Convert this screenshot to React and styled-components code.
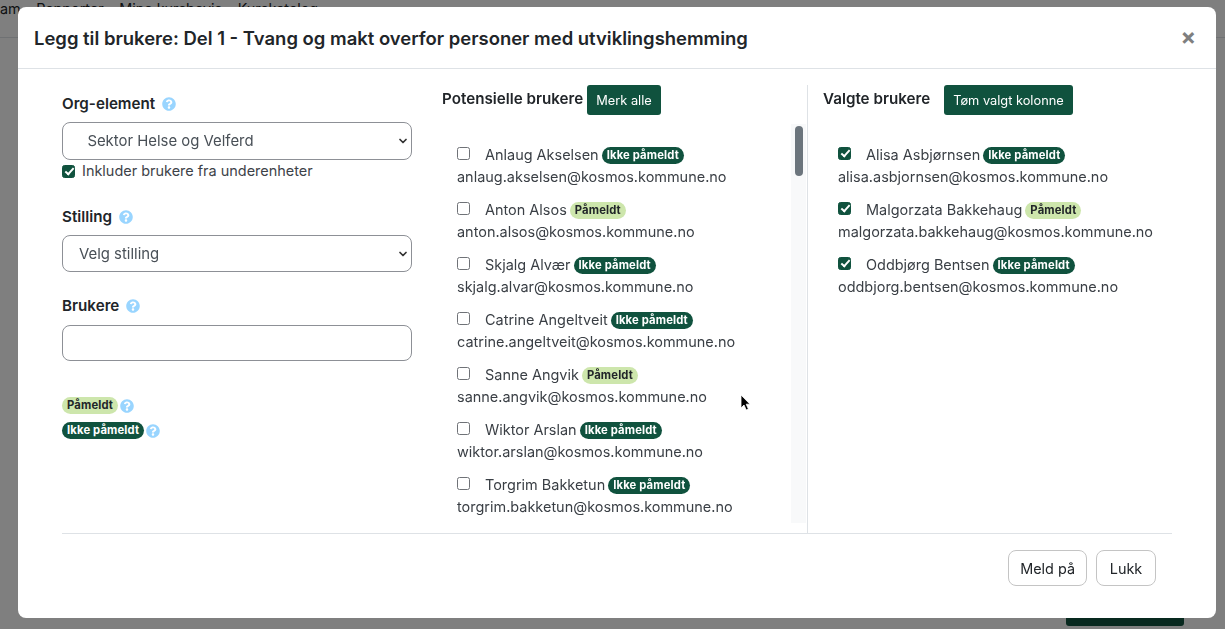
import React from 'react'
import styled, { createGlobalStyle } from 'styled-components'
import { FaQuestionCircle } from 'react-icons/fa'
import { ChevronDown } from 'lucide-react'

const green = '#10523e'

const potential = [
    { name: 'Anlaug Akselsen', email: 'anlaug.akselsen@kosmos.kommune.no', joined: false },
    { name: 'Anton Alsos', email: 'anton.alsos@kosmos.kommune.no', joined: true },
    { name: 'Skjalg Alvær', email: 'skjalg.alvar@kosmos.kommune.no', joined: false },
    { name: 'Catrine Angeltveit', email: 'catrine.angeltveit@kosmos.kommune.no', joined: false },
    { name: 'Sanne Angvik', email: 'sanne.angvik@kosmos.kommune.no', joined: true },
    { name: 'Wiktor Arslan', email: 'wiktor.arslan@kosmos.kommune.no', joined: false },
    { name: 'Torgrim Bakketun', email: 'torgrim.bakketun@kosmos.kommune.no', joined: false },
]

const selected = [
    { name: 'Alisa Asbjørnsen', email: 'alisa.asbjornsen@kosmos.kommune.no', joined: false },
    { name: 'Malgorzata Bakkehaug', email: 'malgorzata.bakkehaug@kosmos.kommune.no', joined: true },
    { name: 'Oddbjørg Bentsen', email: 'oddbjorg.bentsen@kosmos.kommune.no', joined: false },
]

const GlobalStyle = createGlobalStyle`
    html, body {
        margin: 0;
        height: 100%;
        overflow: hidden;
    }
    body {
        font-family: Inter, "Liberation Sans", sans-serif;
        font-size: 15px;
        color: #212529;
        background: #fff;
    }
`

const Page = styled.div`
    height: 100vh;
    display: flex;
    flex-direction: column;
    justify-content: space-between;
`

const Nav = styled.nav`
    height: 38px;
    box-sizing: border-box;
    border-bottom: 1px solid #dee2e6;
    display: flex;
    gap: 15.5px;
    font-size: 14.4px;
    line-height: 18px;
`

const PageFoot = styled.div`
    display: flex;
    justify-content: flex-end;
    padding: 0 41px 3px 0;
`

const PageButton = styled.div`
    width: 118px;
    height: 30px;
    background: ${green};
    border-radius: 3px;
`

const Backdrop = styled.div`
    position: fixed;
    inset: 0;
    background: rgba(0, 0, 0, 0.5);
    padding: 7px 9px 11px 18px;
    box-sizing: border-box;
`

const Modal = styled.div`
    height: 100%;
    background: #fff;
    border-radius: 8px;
    display: flex;
    flex-direction: column;
`

const ModalHeader = styled.header`
    height: 62px;
    box-sizing: border-box;
    flex: none;
    display: flex;
    align-items: center;
    justify-content: space-between;
    padding: 0 20px 0 16px;
    border-bottom: 1px solid #dee2e6;
`

const Title = styled.h5`
    margin: 0;
    font-size: 18.47px;
    font-weight: 600;
    color: #212529;
`

const CloseButton = styled.button`
    border: 0;
    background: none;
    padding: 0;
    font-family: inherit;
    font-size: 23px;
    line-height: 27px;
    font-weight: 700;
    color: #7f7f7f;
`

const ModalBody = styled.div`
    flex: 1;
    min-height: 0;
    margin: 0 44px;
    padding-top: 16px;
    display: grid;
    grid-template-columns: 350px 396px 1fr;
    border-bottom: 1px solid #dee2e6;
`

const LeftColumn = styled.div`
    display: flex;
    flex-direction: column;
    padding-top: 10px;
`

const Field = styled.div`
    margin-bottom: ${p => p.$gap}px;
`

const Label = styled.div`
    display: flex;
    align-items: center;
    gap: 7px;
    font-weight: 600;
    font-size: 15.2px;
    line-height: 18px;
    margin-bottom: ${p => p.$gap}px;
`

const HelpIcon = styled(FaQuestionCircle)`
    width: 14px;
    height: 14px;
    color: #99d5ff;
    flex: none;
`

const SelectWrap = styled.div`
    position: relative;
    svg {
        position: absolute;
        right: 3px;
        top: 50%;
        transform: translateY(-50%);
        width: 12px;
        height: 12px;
        stroke-width: 3.5;
        color: #333;
        pointer-events: none;
    }
`

const Select = styled.select`
    display: block;
    width: 100%;
    height: ${p => p.$height}px;
    appearance: none;
    background: #fff;
    border: 1px solid #8d9096;
    border-radius: 8px;
    padding: 0 16px;
    font-family: inherit;
    font-size: 14.9px;
    color: #495057;
`

const TextInput = styled.input`
    display: block;
    width: 100%;
    height: 36px;
    box-sizing: border-box;
    border: 1px solid #8d9096;
    border-radius: 8px;
    background: #fff;
`

const IncludeRow = styled.label`
    display: flex;
    align-items: center;
    gap: 7px;
    margin-top: 2px;
    line-height: 18px;
    color: #3d4248;
    font-size: 14.46px;
`

const Legend = styled.div`
    display: flex;
    flex-direction: column;
    gap: 8px;
    margin-top: 36px;
`

const LegendRow = styled.div`
    display: flex;
    align-items: center;
    gap: 2px;
    height: 17px;
`

const Badge = styled.span`
    display: inline-block;
    padding: 0 5px;
    border-radius: 9px;
    font-size: 11.25px;
    line-height: 17px;
    height: 17px;
    font-weight: 700;
    letter-spacing: 0.15px;
    background: ${p => (p.$joined ? '#cde6ac' : green)};
    color: ${p => (p.$joined ? '#212529' : '#fff')};
`

const Column = styled.section`
    display: flex;
    flex-direction: column;
    min-width: 0;
`

const MiddleColumn = styled(Column)`
    margin-left: 30px;
    border-right: 1px solid #dee2e6;
`

const RightColumn = styled(Column)`
    padding-left: 15px;
`

const ColumnHead = styled.div`
    display: flex;
    align-items: flex-start;
    gap: ${p => p.$gap}px;
    height: 39px;
    flex: none;
`

const ColumnTitle = styled.span`
    font-weight: 600;
    font-size: 15.2px;
    line-height: 28px;
`

const GreenButton = styled.button`
    height: 30px;
    padding: 0 9px;
    border: 0;
    border-radius: 3px;
    background: ${green};
    color: #fff;
    font-family: inherit;
    font-size: 12.8px;
`

const ScrollWrap = styled.div`
    position: relative;
    height: 399px;
    flex: none;
`

const UserList = styled.div`
    height: 100%;
    overflow: hidden;
    padding: 20px 0 0 15px;
    box-sizing: border-box;
`

const Track = styled.div`
    position: absolute;
    top: 0;
    right: 1px;
    bottom: 0;
    width: 15px;
    background: #f8f9fa;
`

const Thumb = styled.div`
    position: absolute;
    top: 2px;
    left: 4px;
    width: 8px;
    height: 50px;
    border-radius: 4px;
    background: #6c757d;
`

const SelectedList = styled.div`
    padding: 20px 0 0 15px;
`

const UserRow = styled.div`
    height: 55px;
    line-height: 22px;
    font-size: 14.46px;
    color: #3a3f45;
    white-space: nowrap;
`

const NameLine = styled.div`
    display: flex;
    align-items: center;
    height: 22px;
`

const Check = styled.input`
    appearance: none;
    width: 13px;
    height: 13px;
    margin: 0 15px 0 0;
    flex: none;
    box-sizing: border-box;
    border: 1px solid #6f7277;
    border-radius: 2.5px;
    background: #fff;
    position: relative;
    top: -2px;
    &:checked {
        background: ${green};
        border-color: ${green};
    }
    &:checked::after {
        content: '';
        position: absolute;
        left: 3.5px;
        top: 0.5px;
        width: 3px;
        height: 7px;
        border: solid #fff;
        border-width: 0 2px 2px 0;
        transform: rotate(42deg);
    }
`

const IncludeCheck = styled(Check)`
    margin: 0;
    top: 0;
`

const Name = styled.span`
    margin-right: 3px;
`

const ModalFooter = styled.footer`
    flex: none;
    height: 84px;
    box-sizing: border-box;
    display: flex;
    justify-content: flex-end;
    gap: 9px;
    padding: 16px 60px 0 0;
`

const OutlineButton = styled.button`
    height: 36px;
    min-width: 60px;
    padding: 0 11px;
    border: 1px solid #c4c4c4;
    border-radius: 8px;
    background: #fff;
    color: #212529;
    font-family: inherit;
    font-size: 14.4px;
`

const Pointer = styled.svg`
    position: absolute;
    left: 740px;
    top: 394px;
    width: 11px;
    height: 17px;
`

const UserEntry = ({ user, checked }) => (
    <UserRow>
        <NameLine>
            <Check type="checkbox" defaultChecked={checked} />
            <Name>{user.name}</Name>
            <Badge $joined={user.joined}>{user.joined ? 'Påmeldt' : 'Ikke påmeldt'}</Badge>
        </NameLine>
        <div>{user.email}</div>
    </UserRow>
)

export default function App() {
    return (
        <>
            <GlobalStyle />
            <Page>
                <Nav>
                    <span>am</span>
                    <span>Rapporter</span>
                    <span>Mine kursbevis</span>
                    <span>Kurskatalog</span>
                </Nav>
                <PageFoot>
                    <PageButton />
                </PageFoot>
            </Page>
            <Backdrop>
                <Modal>
                    <ModalHeader>
                        <Title>Legg til brukere: Del 1 - Tvang og makt overfor personer med utviklingshemming</Title>
                        <CloseButton>×</CloseButton>
                    </ModalHeader>
                    <ModalBody>
                        <LeftColumn>
                            <Field $gap={28}>
                                <Label $gap={9}>Org-element <HelpIcon /></Label>
                                <SelectWrap>
                                    <Select $height={38} defaultValue="sektor">
                                        <option value="sektor">{'\u00a0\u00a0Sektor Helse og Velferd'}</option>
                                    </Select>
                                    <ChevronDown />
                                </SelectWrap>
                                <IncludeRow>
                                    <IncludeCheck type="checkbox" defaultChecked />
                                    Inkluder brukere fra underenheter
                                </IncludeRow>
                            </Field>
                            <Field $gap={25}>
                                <Label $gap={9}>Stilling <HelpIcon /></Label>
                                <SelectWrap>
                                    <Select $height={37} defaultValue="velg">
                                        <option value="velg">Velg stilling</option>
                                    </Select>
                                    <ChevronDown />
                                </SelectWrap>
                            </Field>
                            <Field $gap={0}>
                                <Label $gap={10}>Brukere <HelpIcon /></Label>
                                <TextInput type="text" />
                            </Field>
                            <Legend>
                                <LegendRow><Badge $joined>Påmeldt</Badge><HelpIcon /></LegendRow>
                                <LegendRow><Badge>Ikke påmeldt</Badge><HelpIcon /></LegendRow>
                            </Legend>
                        </LeftColumn>
                        <MiddleColumn>
                            <ColumnHead $gap={4}>
                                <ColumnTitle>Potensielle brukere</ColumnTitle>
                                <GreenButton>Merk alle</GreenButton>
                            </ColumnHead>
                            <ScrollWrap>
                                <UserList>
                                    {potential.map(user => <UserEntry key={user.email} user={user} />)}
                                </UserList>
                                <Track><Thumb /></Track>
                            </ScrollWrap>
                        </MiddleColumn>
                        <RightColumn>
                            <ColumnHead $gap={14}>
                                <ColumnTitle>Valgte brukere</ColumnTitle>
                                <GreenButton>Tøm valgt kolonne</GreenButton>
                            </ColumnHead>
                            <SelectedList>
                                {selected.map(user => <UserEntry key={user.email} user={user} checked />)}
                            </SelectedList>
                        </RightColumn>
                    </ModalBody>
                    <ModalFooter>
                        <OutlineButton>Meld på</OutlineButton>
                        <OutlineButton>Lukk</OutlineButton>
                    </ModalFooter>
                </Modal>
            </Backdrop>
            <Pointer viewBox="0 0 11 17">
                <path d="M1 1v13l3-3 2.2 5 2.2-1-2.2-4.8H10z" fill="#000" stroke="#fff" strokeWidth="0.8" />
            </Pointer>
        </>
    )
}
